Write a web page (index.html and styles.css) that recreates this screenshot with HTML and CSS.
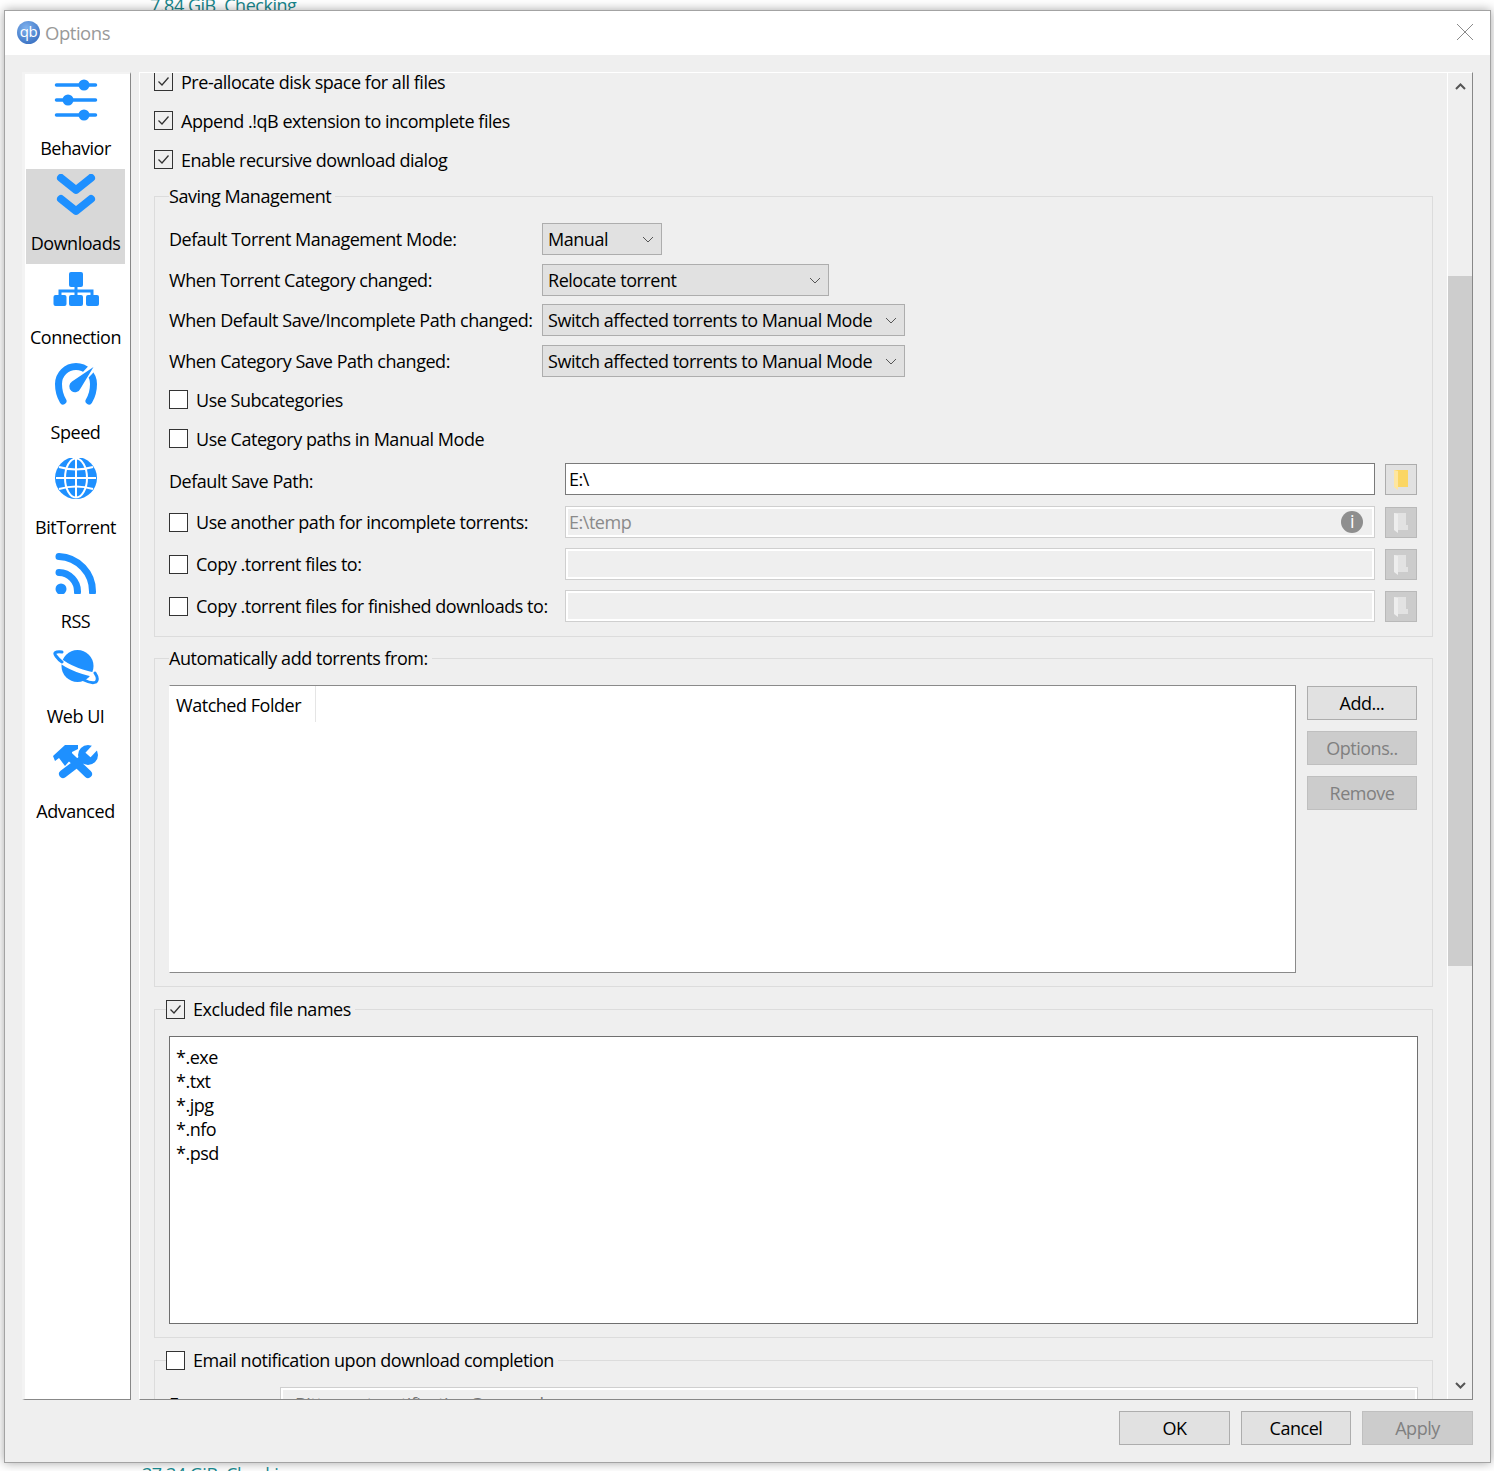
FILE: index.html
```html
<!DOCTYPE html>
<html lang="en">
<head>
  <meta charset="UTF-8">
  <title>Options</title>
  <link rel="stylesheet" href="styles.css">
</head>
<body>
  <div class="peek peek-top"><span>7.84 GiB&nbsp; Checking</span></div>

  <div class="dialog">
    <div class="titlebar">
      <span class="logo">qb</span>
      <span class="title">Options</span>
      <svg class="close" width="18" height="18" viewBox="0 0 18 18"><path d="M1 1l16 16M17 1L1 17" stroke="#8a8a8a" stroke-width="1" fill="none"/></svg>
    </div>

    <div class="main">
      <!-- left tabs -->
      <div class="sidebar">
        <div class="tab">
          <svg class="tab-icon" width="46" height="42" viewBox="0 0 46 42">
            <path d="M3.500 6h39M3.500 21h39M3.500 36h39" stroke="#1e90ff" stroke-width="3.500" stroke-linecap="round"/>
            <circle cx="31" cy="6" r="5.500" fill="#1e90ff"/><circle cx="15" cy="21" r="5.500" fill="#1e90ff"/><circle cx="31" cy="36" r="5.500" fill="#1e90ff"/>
          </svg>
          <span>Behavior</span>
        </div>
        <div class="tab selected">
          <svg class="tab-icon" width="46" height="42" viewBox="0 0 46 42">
            <path d="M8 4l15 12L38 4M8 25l15 12 15-12" stroke="#1e90ff" stroke-width="8" stroke-linecap="round" stroke-linejoin="round" fill="none"/>
          </svg>
          <span>Downloads</span>
        </div>
        <div class="tab">
          <svg class="tab-icon" width="46" height="42" viewBox="0 0 46 42">
            <path d="M23 16v12M7 28v-5h32v5" stroke="#1e90ff" stroke-width="3" fill="none"/>
            <rect x="16" y="4" width="14" height="15" rx="2" fill="#1e90ff"/>
            <rect x="0.500" y="27" width="13" height="11" rx="2" fill="#1e90ff"/><rect x="16" y="27" width="14" height="11" rx="2" fill="#1e90ff"/><rect x="33" y="27" width="13" height="11" rx="2" fill="#1e90ff"/>
          </svg>
          <span>Connection</span>
        </div>
        <div class="tab">
          <svg class="tab-icon" width="46" height="42" viewBox="0 0 46 42">
            <path d="M10 38C7 33 5.500 27 5.500 21A17.500 17.500 0 0 1 40.500 21C40.500 27 39 33 36 38" stroke="#1e90ff" stroke-width="7" stroke-linecap="round" fill="none"/>
            <path d="M24 21L42 2" stroke="#fff" stroke-width="8"/>
            <path d="M40.500 4L27.500 25.500a5.800 5.800 0 1 1-8.500-7z" fill="#1e90ff"/>
          </svg>
          <span>Speed</span>
        </div>
        <div class="tab">
          <svg class="tab-icon" width="46" height="42" viewBox="0 0 46 42">
            <circle cx="23" cy="20" r="21" fill="#1e90ff"/>
            <g stroke="#fff" stroke-width="2" fill="none">
              <path d="M3 20h40M23 1v38"/>
              <ellipse cx="23" cy="20" rx="11" ry="19.500"/>
              <path d="M6 9q17 5 34 0M6 31q17-5 34 0"/>
            </g>
          </svg>
          <span>BitTorrent</span>
        </div>
        <div class="tab">
          <svg class="tab-icon" width="46" height="42" viewBox="0 0 46 42">
            <path d="M6 4.500A35 35 0 0 1 39.500 40M6 20.500A19 19 0 0 1 24.500 40" stroke="#1e90ff" stroke-width="7" stroke-linecap="round" fill="none"/>
            <circle cx="8" cy="37" r="5.500" fill="#1e90ff"/>
          </svg>
          <span>RSS</span>
        </div>
        <div class="tab">
          <svg class="tab-icon" width="46" height="42" viewBox="0 0 46 42">
            <circle cx="24.500" cy="19" r="16" fill="#1e90ff"/>
            <path d="M2 9Q14 22 42 28" stroke="#fff" stroke-width="4.500" fill="none"/>
            <path d="M9 5Q-1 4 3 9 6 13 9 15M31 33Q39 37 43 35 46 32 42 26" stroke="#1e90ff" stroke-width="3" stroke-linecap="round" fill="none"/>
          </svg>
          <span>Web UI</span>
        </div>
        <div class="tab">
          <svg class="tab-icon" width="46" height="42" viewBox="0 2 46 42">
            <path d="M14 14L35 34M35 15L10 34" stroke="#1e90ff" stroke-width="8" stroke-linecap="round"/>
            <path d="M0 16L12 5H25V9L19 12V18L12 26 6 18 2 21z" fill="#1e90ff"/>
            <circle cx="35" cy="15" r="10" fill="#1e90ff"/>
            <path d="M35 15L47 2" stroke="#fff" stroke-width="7"/>
          </svg>
          <span>Advanced</span>
        </div>
      </div>

      <!-- settings page -->
      <div class="page">
        <div class="page-content">
          <label class="check-row first"><span class="check"><svg width="17" height="17" viewBox="0 0 17 17"><path d="M3.500 8.500l3.500 3.500 6.500-7.500" stroke="#333" stroke-width="1.300" fill="none"/></svg></span>Pre-allocate disk space for all files</label>
          <label class="check-row"><span class="check"><svg width="17" height="17" viewBox="0 0 17 17"><path d="M3.500 8.500l3.500 3.500 6.500-7.500" stroke="#333" stroke-width="1.300" fill="none"/></svg></span>Append .!qB extension to incomplete files</label>
          <label class="check-row"><span class="check"><svg width="17" height="17" viewBox="0 0 17 17"><path d="M3.500 8.500l3.500 3.500 6.500-7.500" stroke="#333" stroke-width="1.300" fill="none"/></svg></span>Enable recursive download dialog</label>

          <fieldset class="group saving">
            <legend>Saving Management</legend>
            <div class="combo-row h1"><span class="row-label">Default Torrent Management Mode:</span><div class="combo w-manual">Manual<svg width="12" height="7" viewBox="0 0 12 7"><path d="M1 1l5 5 5-5" stroke="#555" fill="none"/></svg></div></div>
            <div class="combo-row h2"><span class="row-label">When Torrent Category changed:</span><div class="combo w-relocate">Relocate torrent<svg width="12" height="7" viewBox="0 0 12 7"><path d="M1 1l5 5 5-5" stroke="#555" fill="none"/></svg></div></div>
            <div class="combo-row h3"><span class="row-label">When Default Save/Incomplete Path changed:</span><div class="combo w-switch">Switch affected torrents to Manual Mode<svg width="12" height="7" viewBox="0 0 12 7"><path d="M1 1l5 5 5-5" stroke="#555" fill="none"/></svg></div></div>
            <div class="combo-row h4"><span class="row-label">When Category Save Path changed:</span><div class="combo w-switch">Switch affected torrents to Manual Mode<svg width="12" height="7" viewBox="0 0 12 7"><path d="M1 1l5 5 5-5" stroke="#555" fill="none"/></svg></div></div>

            <label class="sub-check sc1"><span class="check blank"></span>Use Subcategories</label>
            <label class="sub-check sc2"><span class="check blank"></span>Use Category paths in Manual Mode</label>

            <div class="path-row save">
              <span class="path-label">Default Save Path:</span>
              <input class="path-input active" value="E:\">
              <span class="browse on"><svg width="16" height="21" viewBox="0 0 16 21"><path d="M1 1h14v17H1z" fill="#fbd664"/><path d="M1 1l4 1v19l-4-3z" fill="#fee6a0"/></svg></span>
            </div>
            <div class="path-row">
              <label class="path-label check-label"><span class="check blank"></span>Use another path for incomplete torrents:</label>
              <div class="path-wrap">
                <input class="path-input" value="E:\temp" disabled>
                <span class="info">i</span>
              </div>
              <span class="browse"><svg width="16" height="21" viewBox="0 0 16 21"><path d="M1 1h12v12h2v5H1z" fill="#e2e2e2"/><path d="M1 1l4 1v19l-4-3z" fill="#ededed"/></svg></span>
            </div>
            <div class="path-row">
              <label class="path-label check-label"><span class="check blank"></span>Copy .torrent files to:</label>
              <input class="path-input" disabled>
              <span class="browse"><svg width="16" height="21" viewBox="0 0 16 21"><path d="M1 1h12v12h2v5H1z" fill="#e2e2e2"/><path d="M1 1l4 1v19l-4-3z" fill="#ededed"/></svg></span>
            </div>
            <div class="path-row">
              <label class="path-label check-label"><span class="check blank"></span>Copy .torrent files for finished downloads to:</label>
              <input class="path-input" disabled>
              <span class="browse"><svg width="16" height="21" viewBox="0 0 16 21"><path d="M1 1h12v12h2v5H1z" fill="#e2e2e2"/><path d="M1 1l4 1v19l-4-3z" fill="#ededed"/></svg></span>
            </div>
          </fieldset>

          <fieldset class="group watched">
            <legend>Automatically add torrents from:</legend>
            <div class="watch-list"><div class="watch-head">Watched Folder</div></div>
            <div class="watch-btns">
              <div class="btn">Add...</div>
              <div class="btn off">Options..</div>
              <div class="btn off">Remove</div>
            </div>
          </fieldset>

          <fieldset class="group excluded">
            <legend class="check-legend"><span class="check"><svg width="17" height="17" viewBox="0 0 17 17"><path d="M3.500 8.500l3.500 3.500 6.500-7.500" stroke="#333" stroke-width="1.300" fill="none"/></svg></span>Excluded file names</legend>
            <textarea class="names">*.exe
*.txt
*.jpg
*.nfo
*.psd</textarea>
          </fieldset>

          <fieldset class="group email">
            <legend class="check-legend"><span class="check blank"></span>Email notification upon download completion</legend>
            <div class="email-row"><span class="email-label">From:</span><div class="email-input">Bittorrent_notification@example.com</div></div>
          </fieldset>
        </div>

        <div class="scrollbar">
          <svg class="arrow" width="11" height="7" viewBox="0 0 11 7"><path d="M1 6l4.500-4.500L10 6" stroke="#555" stroke-width="2" fill="none"/></svg>
          <div class="track"><div class="thumb"></div></div>
          <svg class="arrow down" width="11" height="7" viewBox="0 0 11 7"><path d="M1 1l4.500 4.500L10 1" stroke="#555" stroke-width="2" fill="none"/></svg>
        </div>
      </div>
    </div>

    <div class="footer">
      <div class="btn">OK</div>
      <div class="btn cancel">Cancel</div>
      <div class="btn apply">Apply</div>
    </div>
  </div>

  <div class="peek peek-bottom"><span>37.34 GiB&nbsp; Checking</span></div>
</body>
</html>
```

FILE: styles.css
```css
* { box-sizing: border-box; }
html, body { margin: 0; height: 100%; }
body {
  width: 1494px;
  height: 1471px;
  overflow: hidden;
  background: #fff;
  font-family: "Open Sans", "Noto Sans", sans-serif;
  font-size: 18px;
  letter-spacing: -0.47px;
  color: #000;
}

/* window behind the dialog */
.peek { height: 10px; overflow: hidden; padding-left: 150px; color: #17868c; line-height: 10px; position: relative; }
.peek-top span { display: block; margin-top: -6px; line-height: 22px; }
.peek-bottom { height: 8px; padding-left: 142px; }
.peek-bottom span { display: block; line-height: 22px; }

.dialog {
  width: 1487px;
  height: 1453px;
  margin-left: 4px;
  border: 1px solid #a3a3a3;
  background: #efefef;
  box-shadow: 0 0 10px rgba(0,0,0,0.35);
  display: flex;
  flex-direction: column;
  position: relative;
}
.titlebar { height: 44px; background: #fff; display: flex; align-items: center; padding: 0 16px 2px 12px; flex-shrink: 0; }
.logo {
  width: 23px;
  height: 23px;
  border-radius: 50%;
  background: radial-gradient(circle at 40% 30%, #7fb2ee, #2a62b8);
  color: #fff;
  font-size: 15px;
  line-height: 20px;
  text-align: center;
  letter-spacing: -0.5px;
}
.title { margin-left: 5px; color: #999; font-size: 18.500px; }
.close { margin-left: auto; }

.main { display: flex; margin: 17px 17px 0 17px; height: 1328px; flex-shrink: 0; }

/* tabs */
.sidebar {
  width: 109px;
  height: 100%;
  background: #fff;
  border: 1px solid #f3f3f3;
  border-width: 2px 0 0 3px;
  border-right: 1px solid #888;
  border-bottom: 1px solid #888;
  padding: 0 5px 0 1px;
  flex-shrink: 0;
}
.tab { height: 94.670px; display: flex; flex-direction: column; align-items: center; padding-top: 5px; white-space: nowrap; }
.tab span { margin-top: 15px; line-height: 24px; }
.tab.selected { background: #d8d8d8; height: 95px; margin-bottom: -0.330px; }
.tab-icon { flex-shrink: 0; }

/* page */
.page {
  margin-left: 8px;
  width: 1335px;
  height: 100%;
  display: flex;
  border-top: 1px solid #fff;
  border-left: 1px solid #fff;
  border-right: 1px solid #888;
  border-bottom: 1px solid #888;
  overflow: hidden;
}
.page-content { width: 1307px; padding-left: 14px; flex-shrink: 0; overflow: hidden; height: 100%; }

.check {
  width: 19px;
  height: 19px;
  border: 1px solid #333;
  display: inline-block;
  flex-shrink: 0;
  margin-right: 8px;
  background: #efefef;
}
.check svg { display: block; }
.check.blank { background: #fff; }

.check-row { display: flex; align-items: center; height: 19px; margin-top: 20px; }
.check-row.first { margin-top: -1px; }

.group {
  margin: 0;
  padding: 0 14px;
  width: 1279px;
  border: 1px solid #dcdcdc;
  min-width: 0;
}
.group legend { margin-left: 0; padding: 0 4px 0 0; line-height: 24px; white-space: nowrap; }
.group .check-legend { display: flex; align-items: center; margin-left: -3px; padding-right: 4px; }

/* saving management */
.saving { margin-top: 15px; height: 453px; }
.combo-row { display: flex; align-items: center; }
.row-label { width: 373px; flex-shrink: 0; white-space: nowrap; }
.h1 { margin-top: 15px; height: 32px; }
.h2 { margin-top: 9px; height: 32px; }
.h3 { margin-top: 8px; height: 32px; }
.h4 { margin-top: 9px; height: 32px; }
.combo {
  height: 100%;
  background: #e1e1e1;
  border: 1px solid #adadad;
  display: flex;
  align-items: center;
  justify-content: space-between;
  padding: 0 7px 0 5px;
  white-space: nowrap;
}
.w-manual { width: 120px; }
.w-relocate { width: 287px; }
.w-switch { width: 363px; }

.sub-check { display: flex; align-items: center; height: 19px; }
.sc1 { margin-top: 13px; }
.sc2 { margin-top: 20px; }

.path-row { display: flex; align-items: center; height: 32px; margin-top: 10px; }
.path-row.save { margin-top: 15px; margin-bottom: 11px; }
.path-label { width: 396px; flex-shrink: 0; white-space: nowrap; }
.save .path-label { padding-top: 3px; }
.check-label { display: flex; align-items: center; }
.path-wrap { position: relative; width: 810px; flex-shrink: 0; }
.path-input {
  width: 810px;
  height: 32px;
  border: 1px solid #cfcfcf;
  box-shadow: inset 0 0 0 2px #fff;
  background: #efefef;
  font: inherit;
  letter-spacing: inherit;
  color: #8a8a8a;
  padding: 0 3px;
  flex-shrink: 0;
}
.path-input.active { background: #fff; border-color: #7a7a7a; box-shadow: none; color: #000; }
.info {
  position: absolute;
  right: 12px;
  top: 5px;
  width: 22px;
  height: 22px;
  border-radius: 50%;
  background: #8e8e8e;
  color: #fff;
  text-align: center;
  line-height: 21px;
  font-size: 18px;
}
.browse {
  width: 32px;
  height: 31px;
  margin-left: 10px;
  background: #cccccc;
  border: 1px solid #b9b9b9;
  display: flex;
  align-items: center;
  justify-content: center;
  flex-shrink: 0;
}
.browse.on { background: #e1e1e1; border-color: #adadad; }

/* watched folders */
.watched { margin-top: 9px; height: 341px; }
.watched .watch-list { float: left; margin-top: 15px; }
.watch-list {
  width: 1127px;
  height: 288px;
  background: #fff;
  border: 1px solid #8a8a8a;
  border-left-color: #fff;
}
.watch-head { width: 146px; height: 36px; line-height: 38px; padding-left: 6px; border-right: 1px solid #e5e5e5; }
.watch-btns { float: left; margin: 16px 0 0 11px; width: 110px; }
.btn {
  height: 34px;
  width: 110px;
  background: #e1e1e1;
  border: 1px solid #adadad;
  text-align: center;
  line-height: 32px;
  margin-bottom: 11px;
}
.btn.off { background: #cccccc; border-color: #bfbfbf; color: #808080; }

/* excluded names */
.excluded { margin-top: 10px; height: 341px; }
.names {
  display: block;
  width: 1249px;
  height: 288px;
  margin-top: 15px;
  padding: 8px 6px;
  background: #fff;
  border: 1px solid #6f6f6f;
  font: inherit;
  letter-spacing: inherit;
  line-height: 24px;
  color: #000;
  resize: none;
}

/* email */
.email { margin-top: 10px; height: 120px; }
.email-row { display: flex; margin-top: 15px; }
.email-label { width: 111px; flex-shrink: 0; padding-top: 5px; }
.email-input { width: 1138px; height: 40px; background: #efefef; border: 1px solid #cfcfcf; box-shadow: inset 0 0 0 2px #fff; padding: 4px 0 0 14px; color: #777; }

/* scrollbar */
.scrollbar { width: 25px; border-left: 1px solid #fff; display: flex; flex-direction: column; align-items: center; flex-shrink: 0; }
.arrow { flex-shrink: 0; margin: 10px 0 11px; }
.arrow.down { margin: 11px 0 10px; }
.track { flex: 1; width: 100%; }
.thumb { height: 690px; margin-top: 175px; background: #cdcdcd; }

/* footer */
.footer { display: flex; justify-content: flex-end; gap: 11px; padding: 11px 17px 0 0; }
.footer .btn { width: 111px; margin: 0; }
.footer .btn.cancel { width: 110px; }
.footer .btn.apply { background: #cccccc; border-color: #bfbfbf; color: #808080; }
```
